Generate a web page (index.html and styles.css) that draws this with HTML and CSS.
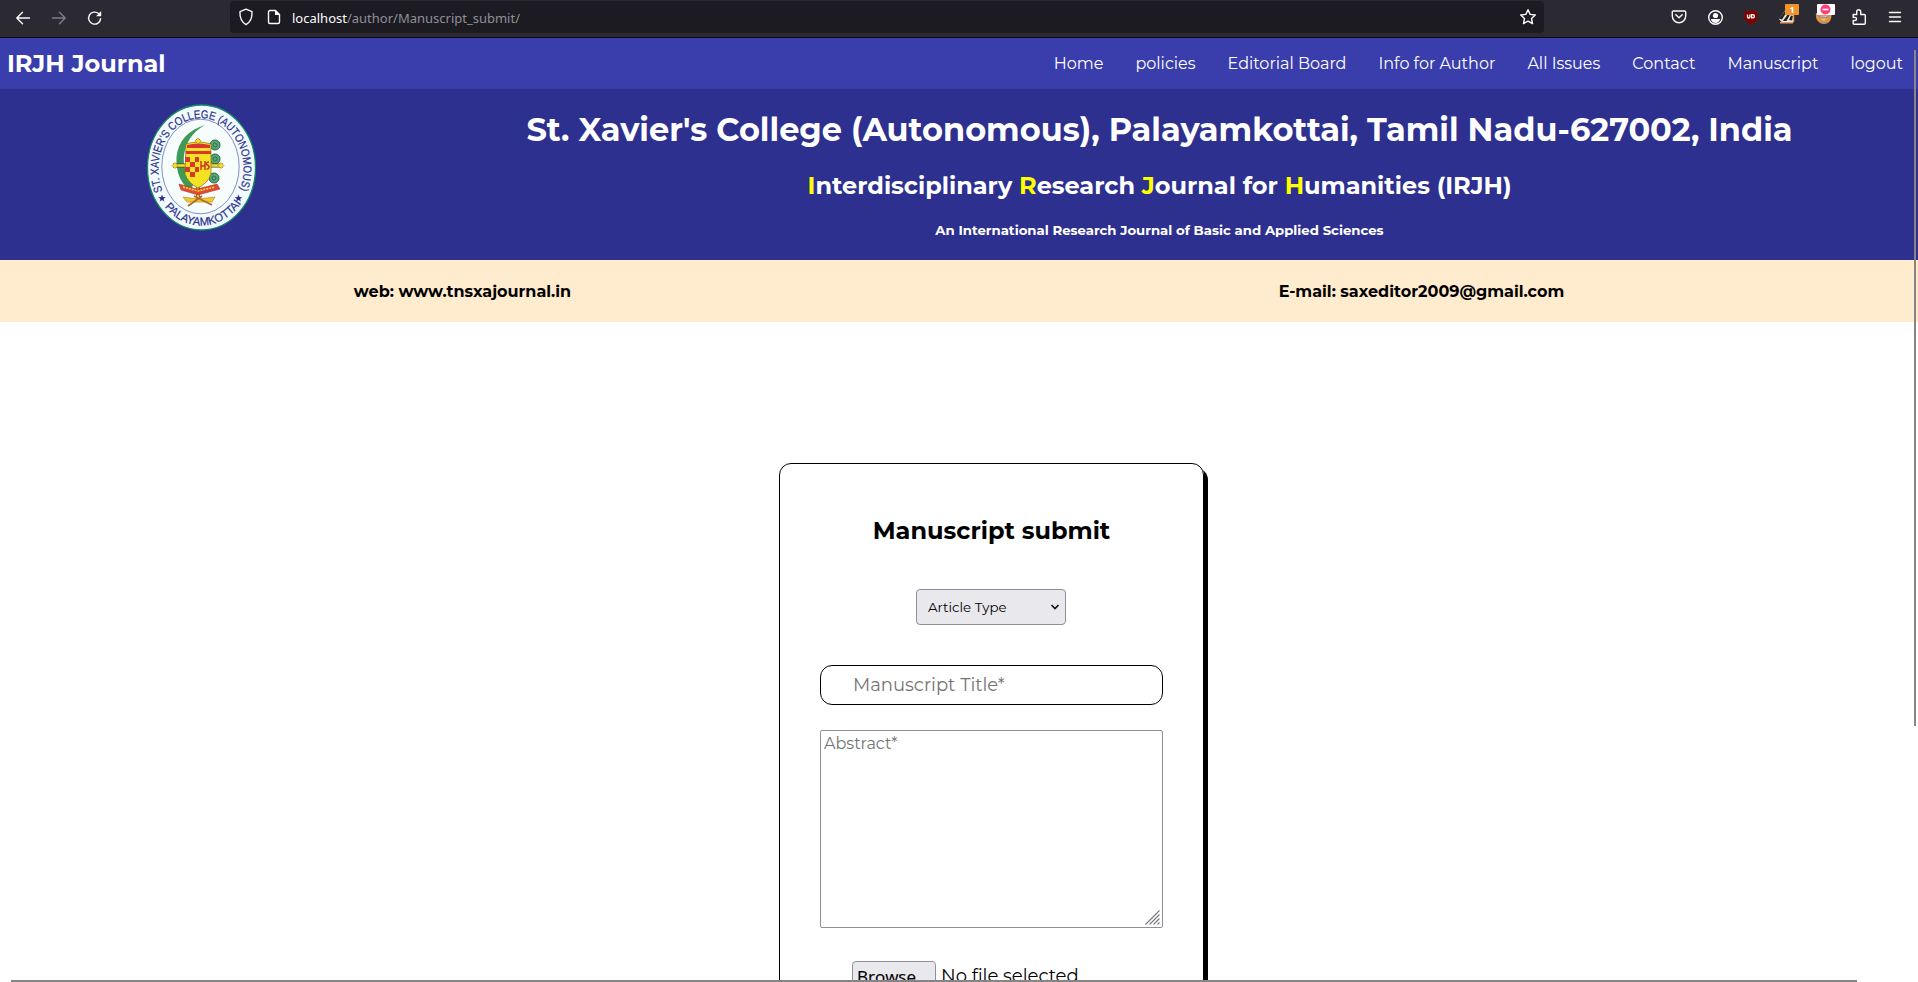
FILE: index.html
```html
<!DOCTYPE html>
<html lang="en">
<head>
<meta charset="utf-8">
<title>Manuscript submit</title>
<link rel="stylesheet" href="styles.css">
</head>
<body>
<div class="window">
  <header class="toolbar">
    <div class="nav-buttons">
      <svg width="16" height="16" viewBox="0 0 16 16"><path class="ln" d="M14.5 8H2M7.5 2.300 1.800 8l5.700 5.700"/></svg>
      <svg class="dim" width="16" height="16" viewBox="0 0 16 16"><path class="ln" d="M1.500 8H14M8.500 2.300 14.200 8l-5.700 5.700"/></svg>
      <svg width="16" height="16" viewBox="0 0 16 16"><path class="ln" d="M13.600 8.600A6 6 0 1 1 11.600 3.600L13 5"/><path fill="#fbfbfe" d="M14.200 1v5.200H9z"/></svg>
    </div>
    <div class="urlbar">
      <svg width="16" height="18" viewBox="0 0 16 18"><path class="ln" d="M8 1.200 14 3.600c.3 5.500-1 10.200-6 13C3 13.800 1.700 9.100 2 3.600z"/></svg>
      <svg class="page-icon" width="16" height="16" viewBox="0 0 16 16"><path class="ln" d="M4 1.500h5.500l4 4v7.500q0 1.500-1.500 1.500H4q-1.500 0-1.500-1.500V3q0-1.500 1.500-1.500z"/><path fill="#fbfbfe" d="M9 1v5h5z"/></svg>
      <span class="url"><b>localhost</b>/author/Manuscript_submit/</span>
      <svg class="star" width="18" height="18" viewBox="0 0 18 18"><path class="ln" d="m9 1.700 2.200 4.700 5.100.6-3.800 3.500 1 5.100L9 13.100l-4.500 2.500 1-5.100L1.700 7l5.100-.6z"/></svg>
    </div>
    <div class="extensions">
      <svg width="20" height="24" viewBox="0 0 20 24"><path class="ln" d="M4.500 6h11q1.200 0 1.200 1.200V11a6.700 6.700 0 0 1-13.400 0V7.200Q3.300 6 4.500 6zM6.800 9.800l3.200 3 3.200-3"/></svg>
      <svg width="20" height="24" viewBox="0 0 20 24"><circle class="ln" cx="10.500" cy="12.500" r="6.800"/><circle cx="10.500" cy="10.500" r="2.600" fill="#fbfbfe"/><path fill="#fbfbfe" d="M5.800 14.100h9.400q-1.200 3.900-4.700 3.900t-4.700-3.900z"/></svg>
      <svg width="20" height="24" viewBox="0 0 20 24"><path fill="#800000" stroke="#5c1518" d="M10 5q3 1.500 6.500 1.700V12q0 4.500-6.500 7.500-6.500-3-6.500-7.500V6.700Q7 6.500 10 5z"/><path fill="none" stroke="#fff" stroke-width="1.300" d="M6.500 9.500v2.300q0 1.200 1.200 1.200t1.200-1.200V9.500M10.600 9.700h1.200q1.600 0 1.600 1.600t-1.600 1.600h-1.200z"/></svg>
      <svg width="20" height="24" viewBox="0 0 20 24"><path fill="#e9e4dd" d="M2 14 8 5.500l9 3V17l-4 1-8-.5z"/><path fill="#222" d="m2 13.500 6-7.500 2 .5-5 8zM6 16l5-7 2 .5-3.500 6.500zM12 15l2-4.500 2 .5-1 4.500z"/><path stroke="#e39a61" d="M3 17.800h13M16.500 10v7" stroke-width="1.500" fill="none"/><rect x="8" y="-1" width="14" height="11" rx="1" fill="#f0932b"/><text class="badge" x="15" y="8">1</text></svg>
      <svg width="20" height="24" viewBox="0 0 20 24"><path fill="#e89441" d="M3 8h15.500q.5 7-3.500 10-4 2-8 0Q2 15 3 8z"/><path fill="#f7c68b" d="m5 11 5 1 5-2-4 6z"/><path stroke="#8a929c" stroke-width="1.300" fill="none" d="M4 10q6 6 13 0M7 17q4 2 8 0"/><rect x="4" y="-1" width="18" height="11" rx="1" fill="#fff"/><circle cx="12.500" cy="4.500" r="5" fill="#ff3d7b"/><path stroke="#fff" stroke-width="1.600" d="M9.500 4.500h6"/></svg>
      <svg width="20" height="24" viewBox="0 0 20 24"><path class="ln" d="M4.200 9.500h3.500V6.800a2 2 0 0 1 4 0v2.700h3.600q1 0 1 1v7.700q0 1-1 1H5.200q-1 0-1-1v-2.700h1.700a1.500 1.500 0 0 0 0-3.100H4.200z"/></svg>
      <svg width="20" height="24" viewBox="0 0 20 24"><path class="ln" d="M4.500 7.500h11M4.500 12h11M4.500 16.500h11"/></svg>
    </div>
  </header>

  <nav class="site-nav">
    <span class="brand">IRJH Journal</span>
    <div class="links">
      <a>Home</a><a>policies</a><a>Editorial Board</a><a>Info for Author</a><a>All Issues</a><a>Contact</a><a>Manuscript</a><a>logout</a>
    </div>
  </nav>

  <section class="banner">
    <svg class="crest" width="112" height="128" viewBox="16 13 112 128">
      <defs>
        <path id="arc-top" d="M34 102A42.500 51 0 1 1 110 102"/>
        <path id="arc-bottom" d="M32 112A51 60 0 0 0 113 112"/>
      </defs>
      <ellipse cx="72.500" cy="77.500" rx="54" ry="62.500" fill="#f1fbfd" stroke="#168a64" stroke-width="1.300"/>
      <ellipse cx="71.500" cy="76.500" rx="38.700" ry="47.300" fill="#f7fdfd" stroke="#6a70b4" stroke-width=".8"/>
      <text class="ring"><textPath href="#arc-top" startOffset="1" textLength="190" lengthAdjust="spacingAndGlyphs">ST. XAVIER'S COLLEGE (AUTONOMOUS)</textPath></text>
      <text class="ring"><textPath href="#arc-bottom" startOffset="6" textLength="90" lengthAdjust="spacingAndGlyphs">PALAYAMKOTTAI</textPath></text>
      <path id="star" fill="#2d308e" d="m33 104.500 1 2.600 2.700.1-2.100 1.700.8 2.700-2.400-1.500-2.300 1.500.7-2.700-2.100-1.700 2.700-.1z"/>
      <use href="#star" x="76.500"/>
      <path fill="#3e9a57" d="M76 35Q50 43 47.500 67q-1 22 13 33l5-6Q53 82 55 65q3-20 21-30z"/>
      <g fill="#57a578" stroke="#256b43"><circle cx="86" cy="55" r="5"/><circle cx="86" cy="69" r="5"/><circle cx="85" cy="88" r="5"/></g>
      <g fill="none" stroke="#256b43" stroke-width=".8"><circle cx="86" cy="55" r="2"/><circle cx="86" cy="69" r="2"/><circle cx="85" cy="88" r="2"/></g>
      <path d="M44 75.500h50M69 49v60" stroke="#5b4a1a" stroke-width="4"/>
      <path d="M44 75.500h50M69 49v60" stroke="#f2df2c" stroke-width="2.600"/>
      <path fill="#f4e223" stroke="#8b6a1d" stroke-width=".7" d="M57 54q12-4 25 0v30q-3 9-13 14-10-5-13-14z"/>
      <path fill="#d8392f" d="M58 55q11-3 23 0v3H58zM57 61h25v3H57zM56 67h5v5h-5zM66 67h4v5h-4zM61 72h5v5h-5zM56 77h5v5h-5zM66 77h4v5h-4zM61 82h5v5h-5z"/>
      <path fill="none" stroke="#c9302b" stroke-width="1.400" d="M72 71v9M72 76h4M76 71v9M80 72q-3 0-2.500 2.500 3 1 2.500 3T77.500 79"/>
      <path fill="#e24b33" stroke="#a42a22" stroke-width=".5" d="m50 94 18 5 20-5 3 5-22 6-17-5z"/>
      <path stroke="#f3df3a" stroke-width="1.500" stroke-dasharray="2 1" fill="none" d="m54 97 15 4 17-4"/>
      <path fill="#f0ca2b" stroke="#b87824" stroke-width=".6" d="m54 107 15 2 17-2-3 5H58z"/>
      <path stroke="#b06a2b" stroke-width="1.800" d="m59 116 14-10M65 106l18 9"/>
      <path fill="#f2df2c" stroke="#8b6a1d" stroke-width=".5" d="M69 48l3 3-3 3-3-3zM43 75.500l3-3 3 3-3 3zM89 75.500l3-3 3 3-3 3z"/>
    </svg>
    <div class="titles">
      <h1>St. Xavier's College (Autonomous), Palayamkottai, Tamil Nadu-627002, India</h1>
      <h2><i>I</i>nterdisciplinary <i>R</i>esearch <i>J</i>ournal for <i>H</i>umanities (IRJH)</h2>
      <h3>An International Research Journal of Basic and Applied Sciences</h3>
    </div>
  </section>

  <section class="contact">
    <span>web: www.tnsxajournal.in</span>
    <span>E-mail: saxeditor2009@gmail.com</span>
  </section>

  <main class="page">
    <form class="card">
      <h2 class="card-title">Manuscript submit</h2>
      <div class="select"><span>Article Type</span><svg width="10" height="8" viewBox="0 0 10 8"><path d="m1.500 2 3.500 3.500L8.500 2" fill="none" stroke="#111" stroke-width="1.600"/></svg></div>
      <div class="field"><span>Manuscript Title*</span></div>
      <div class="area"><span>Abstract*</span><svg class="grip" width="15" height="15" viewBox="0 0 15 15"><path d="M.5 14.500 14.500.500M4.500 14.500l10-10M8.500 14.500l6-6M12.500 14.500l2-2" stroke="#777" stroke-width="1.100"/></svg></div>
      <div class="file"><span class="browse">Browse...</span><span class="nofile">No file selected.</span></div>
    </form>
  </main>
  <div class="vscroll"></div>
  <div class="hscroll"></div>
</div>
</body>
</html>
```
FILE: styles.css
```css
* { box-sizing: border-box; }
body { margin: 0; font-family: Montserrat, Inter, sans-serif; background: #fff; color: #000; }
svg { display: block; flex: none; }
h1, h2, h3 { margin: 0; white-space: nowrap; }
span, a { white-space: nowrap; }
.window { position: relative; width: 1918px; height: 982px; overflow: hidden; display: flex; flex-direction: column; }
.ln { fill: none; stroke: #fbfbfe; stroke-width: 1.4; stroke-linejoin: round; stroke-linecap: round; }
.dim { opacity: .4; }

.toolbar { flex: none; height: 38px; background: #2b2a33; border-bottom: 1px solid #0c0c0d; display: flex; align-items: flex-start; }
.nav-buttons { display: flex; gap: 20px; width: 230px; padding: 10px 0 0 15px; }
.urlbar { width: 1314px; height: 32px; margin-top: 1px; border-radius: 4px; background: #1c1b22; display: flex; align-items: center; padding: 0 7px 0 8px; }
.page-icon { margin-left: 12px; }
.url { margin: 1px 0 0 10px; font: 13px/18px "Noto Sans", sans-serif; color: #8f8f96; flex: 1; }
.url b { font-weight: 400; color: #fbfbfe; }
.extensions { display: flex; gap: 16px; margin-left: 125px; padding-top: 5px; }
.extensions svg { overflow: visible; }
.badge { font: 700 9px "Open Sans", sans-serif; fill: #fff; text-anchor: middle; }

.site-nav { flex: none; height: 51px; background: #3a3dac; color: #fff; display: flex; align-items: center; justify-content: space-between; padding: 0 15px 0 7px; }
.brand { font-size: 24px; font-weight: 700; }
.links { display: flex; gap: 32px; font-size: 16px; }

.banner { flex: none; height: 171px; background: #2d308e; color: #fff; display: flex; padding: 14px 0 0 145px; }
.titles { flex: 1; text-align: center; margin-left: 144px; }
.titles h1 { font-size: 32px; line-height: 40px; margin-top: 7px; }
.titles h2 { font-size: 24px; line-height: 30px; margin-top: 21px; }
.titles h3 { font-size: 13.280px; line-height: 18px; margin-top: 20px; }
.titles i { font-style: normal; color: #ff0; }
.ring { font: 11.500px "Liberation Sans", Arial, sans-serif; fill: #2d308e; stroke: #2d308e; stroke-width: .2; }

.contact { flex: none; height: 62px; background: #ffeccf; display: flex; align-items: center; justify-content: space-around; font-size: 16px; font-weight: 700; }

.page { flex: 1; min-height: 0; padding: 141px 0 0 779px; }
.card { width: 425px; height: 640px; border: 1px solid #000; border-radius: 12px; box-shadow: 4px 5px 0 #000; padding: 50px 40px 0; display: flex; flex-direction: column; }
.card-title { font-size: 24px; line-height: 34px; text-align: center; }
.select { width: 150px; height: 36px; margin: 41px 0 0 96px; border: 1px solid #8f8f9d; border-radius: 4px; background: #e9e9ed; display: flex; align-items: center; justify-content: space-between; padding: 0 5px 0 11px; font-size: 13.333px; }
.field { height: 40px; margin-top: 40px; border: 1px solid #000; border-radius: 12px; padding: 0 31px 0 32px; font-size: 18px; line-height: 39px; color: #757575; }
.area { position: relative; height: 198px; margin-top: 25px; border: 1px solid #8f8f9d; border-radius: 2px; padding: 2px 3px; font-size: 16px; line-height: 21px; color: #757575; }
.grip { position: absolute; right: 2px; bottom: 2px; }
.file { display: flex; gap: 5px; margin: 33px 0 0 32px; font-size: 18px; line-height: 28px; }
.browse { width: 84px; height: 30px; border: 1px solid #8f8f9d; border-radius: 4px; background: #e9e9ed; padding-left: 4px; font: 17px/29px "Open Sans", sans-serif; -webkit-text-stroke: .2px #000; }
.nofile { padding-top: 1px; }
.vscroll { position: absolute; left: 1914px; top: 50px; width: 2px; height: 676px; background: #858585; }
.hscroll { position: absolute; left: 11px; top: 980px; width: 1846px; height: 2px; background: #858585; }
```
